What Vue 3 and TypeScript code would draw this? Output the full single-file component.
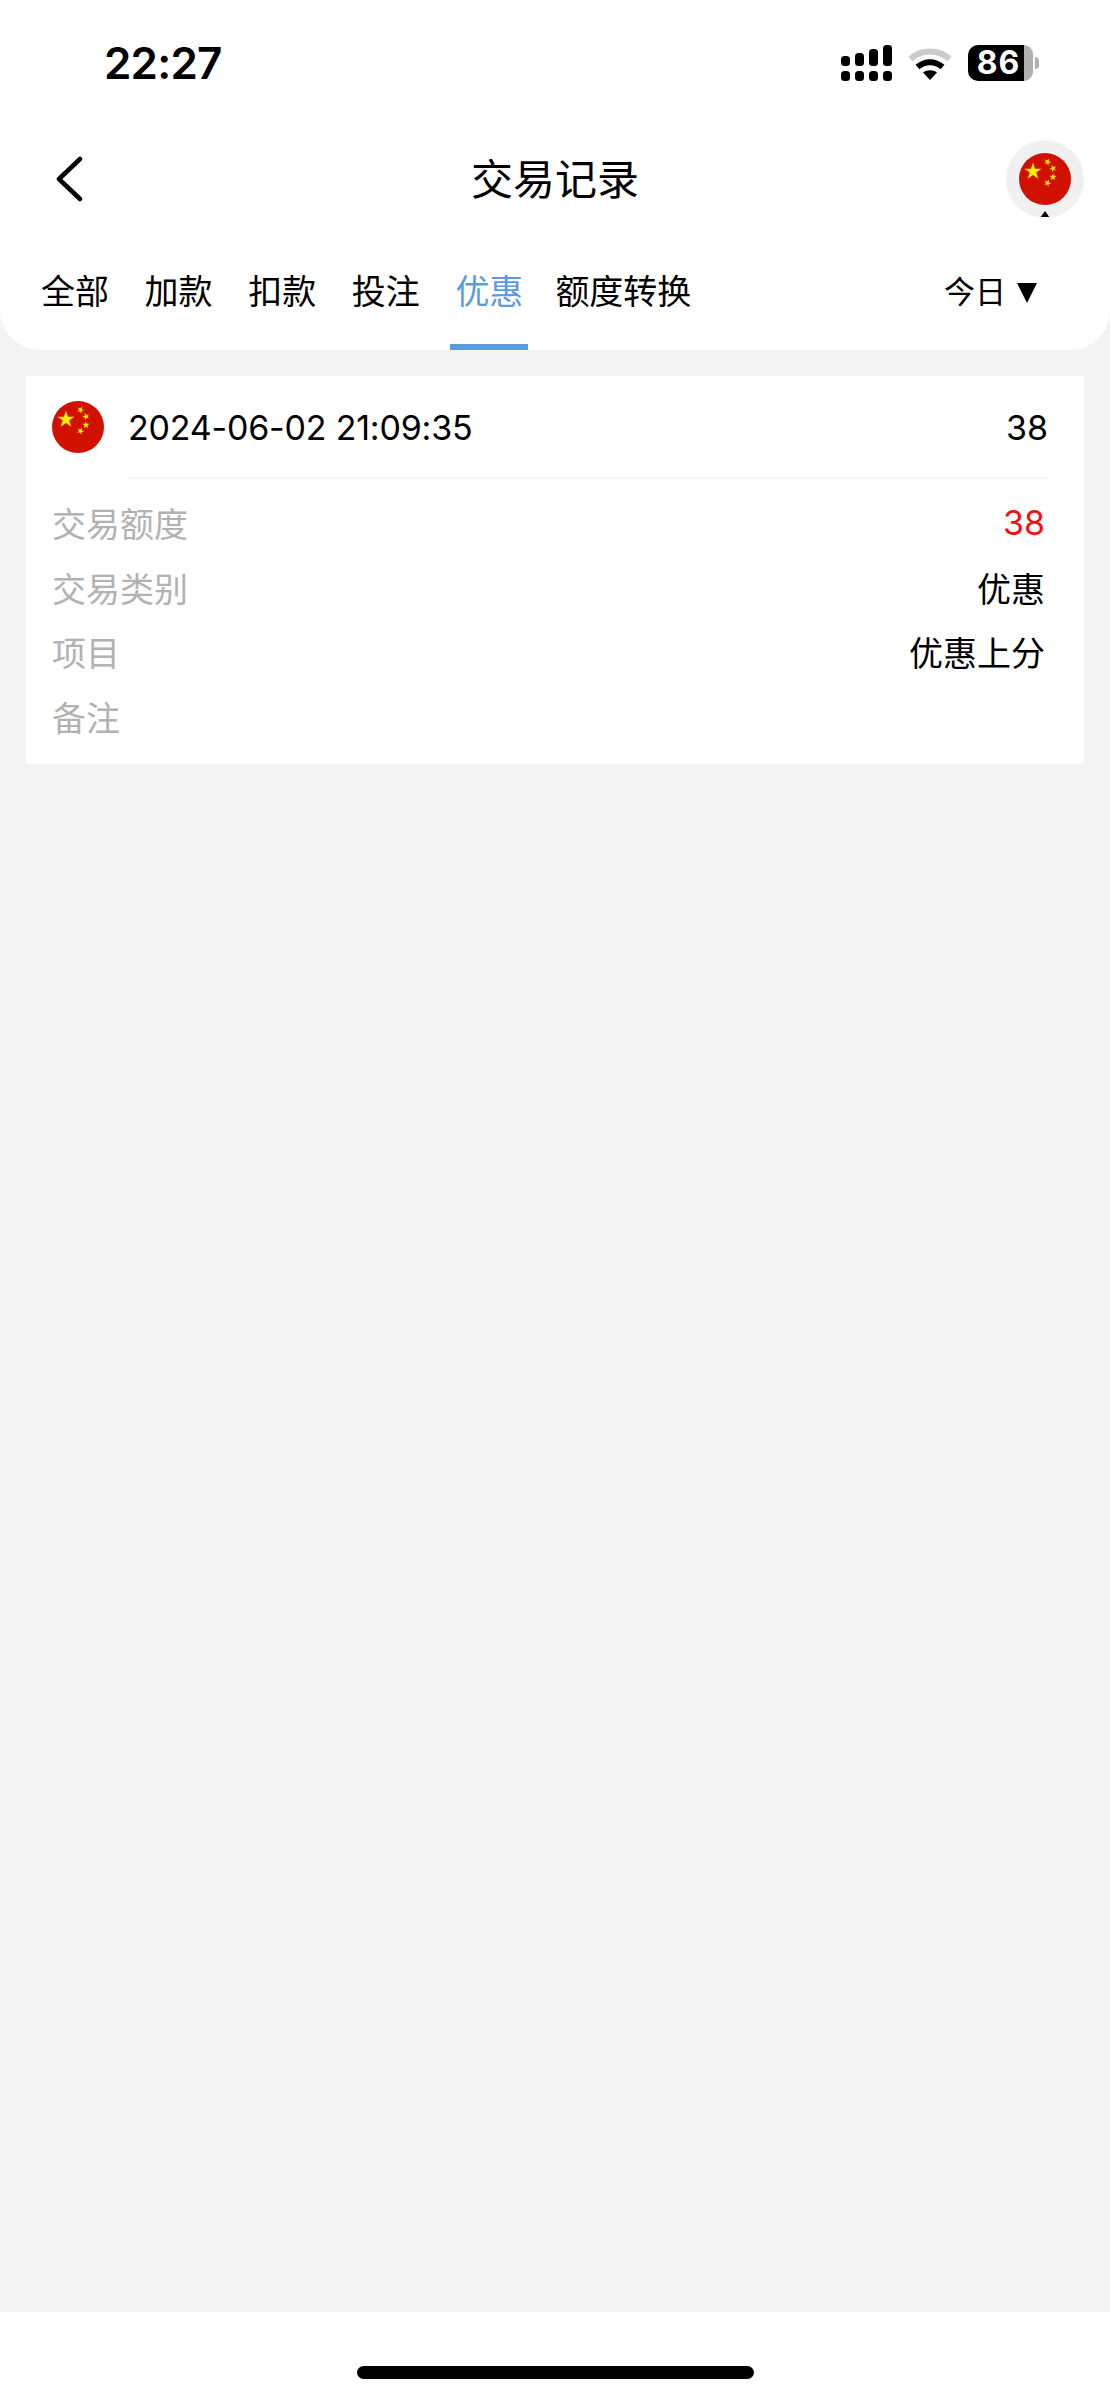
<template>
  <div class="page">
    <header class="top">
      <div class="status">
        <span class="time">22:27</span>
        <div class="status-icons">
          <svg class="signal" width="51" height="36" viewBox="0 0 51 36">
            <rect v-for="b in signalBars" :key="b.x" :x="b.x" :y="b.y" width="9" :height="b.h" rx="3.5" />
            <rect v-for="x in signalDots" :key="x" :x="x" y="26" width="9" height="10" rx="3.5" />
          </svg>
          <svg class="wifi" width="44" height="34" viewBox="0 0 44 34">
            <path d="M2.500 13 C13 3 31 3 41.500 13" fill="none" stroke="#cbcbcb" stroke-width="6" />
            <path d="M9.500 21 C17 14.500 27 14.500 34.500 21" fill="none" stroke="#000" stroke-width="6" />
            <path d="M15 26.500 L22 34 L29 26.500 C25 23.500 19 23.500 15 26.500 Z" />
          </svg>
          <div class="battery">
            <div class="battery-body">
              <span class="battery-num">86</span>
              <span class="battery-rest"></span>
            </div>
            <span class="battery-nub"></span>
          </div>
        </div>
      </div>

      <div class="nav">
        <div class="nav-side">
          <svg class="back" width="28" height="46" viewBox="0 0 28 46">
            <path d="M25 3 L4 23 L25 43" fill="none" stroke="#000" stroke-width="4.500" stroke-linecap="round" stroke-linejoin="round" />
          </svg>
        </div>
        <h1 class="title">交易记录</h1>
        <div class="nav-side end">
          <div class="avatar">
            <svg class="flag" width="52" height="52" viewBox="0 0 52 52">
              <circle cx="26" cy="26" r="26" fill="#d21000" />
              <polygon v-for="(s, i) in stars" :key="i" :points="s" fill="#ffee00" />
            </svg>
            <span class="avatar-caret"></span>
          </div>
        </div>
      </div>

      <div class="tabs">
        <span v-for="t in tabs" :key="t" class="tab" :class="{ active: t === current }">{{ t }}</span>
        <span class="range">今日<i class="range-caret"></i></span>
      </div>
    </header>

    <main class="list">
      <section class="card">
        <div class="card-head">
          <svg class="flag" width="52" height="52" viewBox="0 0 52 52">
            <circle cx="26" cy="26" r="26" fill="#d21000" />
            <polygon v-for="(s, i) in stars" :key="i" :points="s" fill="#ffee00" />
          </svg>
          <div class="card-line">
            <span class="stamp">2024-06-02 21:09:35</span>
            <span>38</span>
          </div>
        </div>
        <div class="rows">
          <div v-for="r in rows" :key="r.label" class="row">
            <span class="label">{{ r.label }}</span>
            <span :class="{ red: r.red }">{{ r.value }}</span>
          </div>
        </div>
      </section>
    </main>

    <footer class="bottom">
      <span class="home"></span>
    </footer>
  </div>
</template>

<script setup lang="ts">
const tabs = ["全部", "加款", "扣款", "投注", "优惠", "额度转换"];
const current = "优惠";

const rows = [
  { label: "交易额度", value: "38", red: true },
  { label: "交易类别", value: "优惠" },
  { label: "项目", value: "优惠上分" },
  { label: "备注", value: "" },
];

const signalBars = [
  { x: 0, y: 11, h: 10 },
  { x: 14, y: 8, h: 13 },
  { x: 28, y: 4, h: 17 },
  { x: 42, y: 0, h: 21 },
];
const signalDots = [0, 14, 28, 42];

function star(cx: number, cy: number, r: number, rot: number) {
  const pts: string[] = [];
  for (let i = 0; i < 10; i++) {
    const rad = i % 2 ? r * 0.38 : r;
    const a = rot + (i * Math.PI) / 5 - Math.PI / 2;
    pts.push((cx + rad * Math.cos(a)).toFixed(2) + "," + (cy + rad * Math.sin(a)).toFixed(2));
  }
  return pts.join(" ");
}

const stars = [
  star(14, 18.500, 9, 0),
  star(28.500, 9, 3.800, 0.4),
  star(34, 15.500, 3.800, 0.9),
  star(34, 24, 3.800, 0),
  star(28.500, 30, 3.800, 0.4),
];
</script>

<style scoped>
.page {
  width: 1110px;
  height: 2400px;
  display: flex;
  flex-direction: column;
  background: #f3f3f3;
  color: #000;
  font-family: "Inter", "Noto Sans CJK SC", sans-serif;
  overflow: hidden;
}

.top {
  height: 350px;
  background: #fff;
  border-radius: 0 0 40px 40px;
  display: flex;
  flex-direction: column;
}

.status {
  flex: none;
  height: 126px;
  padding: 0 71px 0 104px;
  display: flex;
  align-items: center;
  justify-content: space-between;
}
.time {
  font-size: 44px;
  font-weight: 600;
  letter-spacing: -0.8px;
}
.status-icons {
  display: flex;
  align-items: center;
  gap: 16px;
}
.signal,
.wifi {
  display: block;
}
.battery {
  display: flex;
  align-items: center;
  gap: 2px;
}
.battery-body {
  width: 65px;
  height: 36px;
  display: flex;
}
.battery-num {
  flex: 1;
  padding-left: 5px;
  background: #000;
  border-radius: 10px 0 0 10px;
  color: #fff;
  font-size: 32px;
  font-weight: 700;
  line-height: 36px;
  text-align: center;
  letter-spacing: 1px;
}
.battery-rest {
  width: 9px;
  background: #b0b0b0;
  border-radius: 0 10px 10px 0;
}
.battery-nub {
  width: 4px;
  height: 12px;
  background: #b0b0b0;
  border-radius: 0 6px 6px 0;
}

.nav {
  flex: none;
  height: 100px;
  padding: 0 26px;
  display: grid;
  grid-template-columns: 1fr auto 1fr;
  align-items: center;
}
.nav-side {
  display: flex;
  padding-top: 6px;
}
.nav-side.end {
  justify-content: flex-end;
}
.back {
  display: block;
  margin-left: 29px;
}
.title {
  margin: 0;
  padding-top: 1px;
  font-size: 42px;
  font-weight: 400;
}
.avatar {
  position: relative;
  width: 78px;
  height: 78px;
  border-radius: 50%;
  background: #f0f0f0;
  display: flex;
  align-items: center;
  justify-content: center;
  clip-path: inset(0 0 1px 0);
}
.avatar-caret {
  position: absolute;
  left: 34px;
  bottom: 0;
  width: 0;
  height: 0;
  border-left: 5px solid transparent;
  border-right: 5px solid transparent;
  border-bottom: 7px solid #000;
}
.flag {
  display: block;
  flex: none;
}

.tabs {
  flex: none;
  height: 124px;
  padding: 0 73px 0 36px;
  display: flex;
  align-items: stretch;
}
.tab {
  padding: 0 5px;
  margin-right: 25.600px;
  height: 124px;
  box-sizing: border-box;
  border-bottom: 6px solid transparent;
  font-size: 34px;
  font-weight: 400;
  line-height: 132px;
}
.tab.active {
  margin-right: 22px;
  color: #5c9ade;
  border-bottom-color: #5c9ade;
}
.tab:last-of-type {
  margin-right: 0;
}
.range {
  margin-left: auto;
  height: 124px;
  font-size: 31px;
  font-weight: 400;
  line-height: 132px;
  display: flex;
  align-items: flex-start;
  gap: 11px;
}
.range-caret {
  margin-top: 57px;
  width: 0;
  height: 0;
  border-left: 10px solid transparent;
  border-right: 10px solid transparent;
  border-top: 20px solid #000;
}

.list {
  flex: 1;
  padding: 26px 26px 0;
}
.card {
  background: #fff;
  height: 388px;
  padding: 25px 36px 0 26px;
  box-sizing: border-box;
}
.card-head {
  display: flex;
  align-items: flex-start;
  gap: 24px;
}
.card-line {
  flex: 1;
  height: 78px;
  padding-top: 2px;
  padding-bottom: 24px;
  box-sizing: border-box;
  border-bottom: 2px solid #f5f5f5;
  display: flex;
  justify-content: space-between;
  align-items: center;
  font-size: 34px;
  line-height: 52px;
}
.stamp {
  letter-spacing: -0.2px;
}
.rows {
  padding: 11px 3px 0 0;
}
.row {
  height: 64.800px;
  display: flex;
  justify-content: space-between;
  align-items: center;
  font-size: 34px;
  font-weight: 400;
}
.label {
  color: #b2b2b2;
}
.red {
  color: #f70f0f;
}

.bottom {
  height: 88px;
  background: #fff;
  display: flex;
  justify-content: center;
  padding-top: 54px;
  box-sizing: border-box;
}
.home {
  width: 397px;
  height: 13px;
  border-radius: 7px;
  background: #000;
}
</style>

<style>
body {
  background: #f3f3f3;
}
</style>
